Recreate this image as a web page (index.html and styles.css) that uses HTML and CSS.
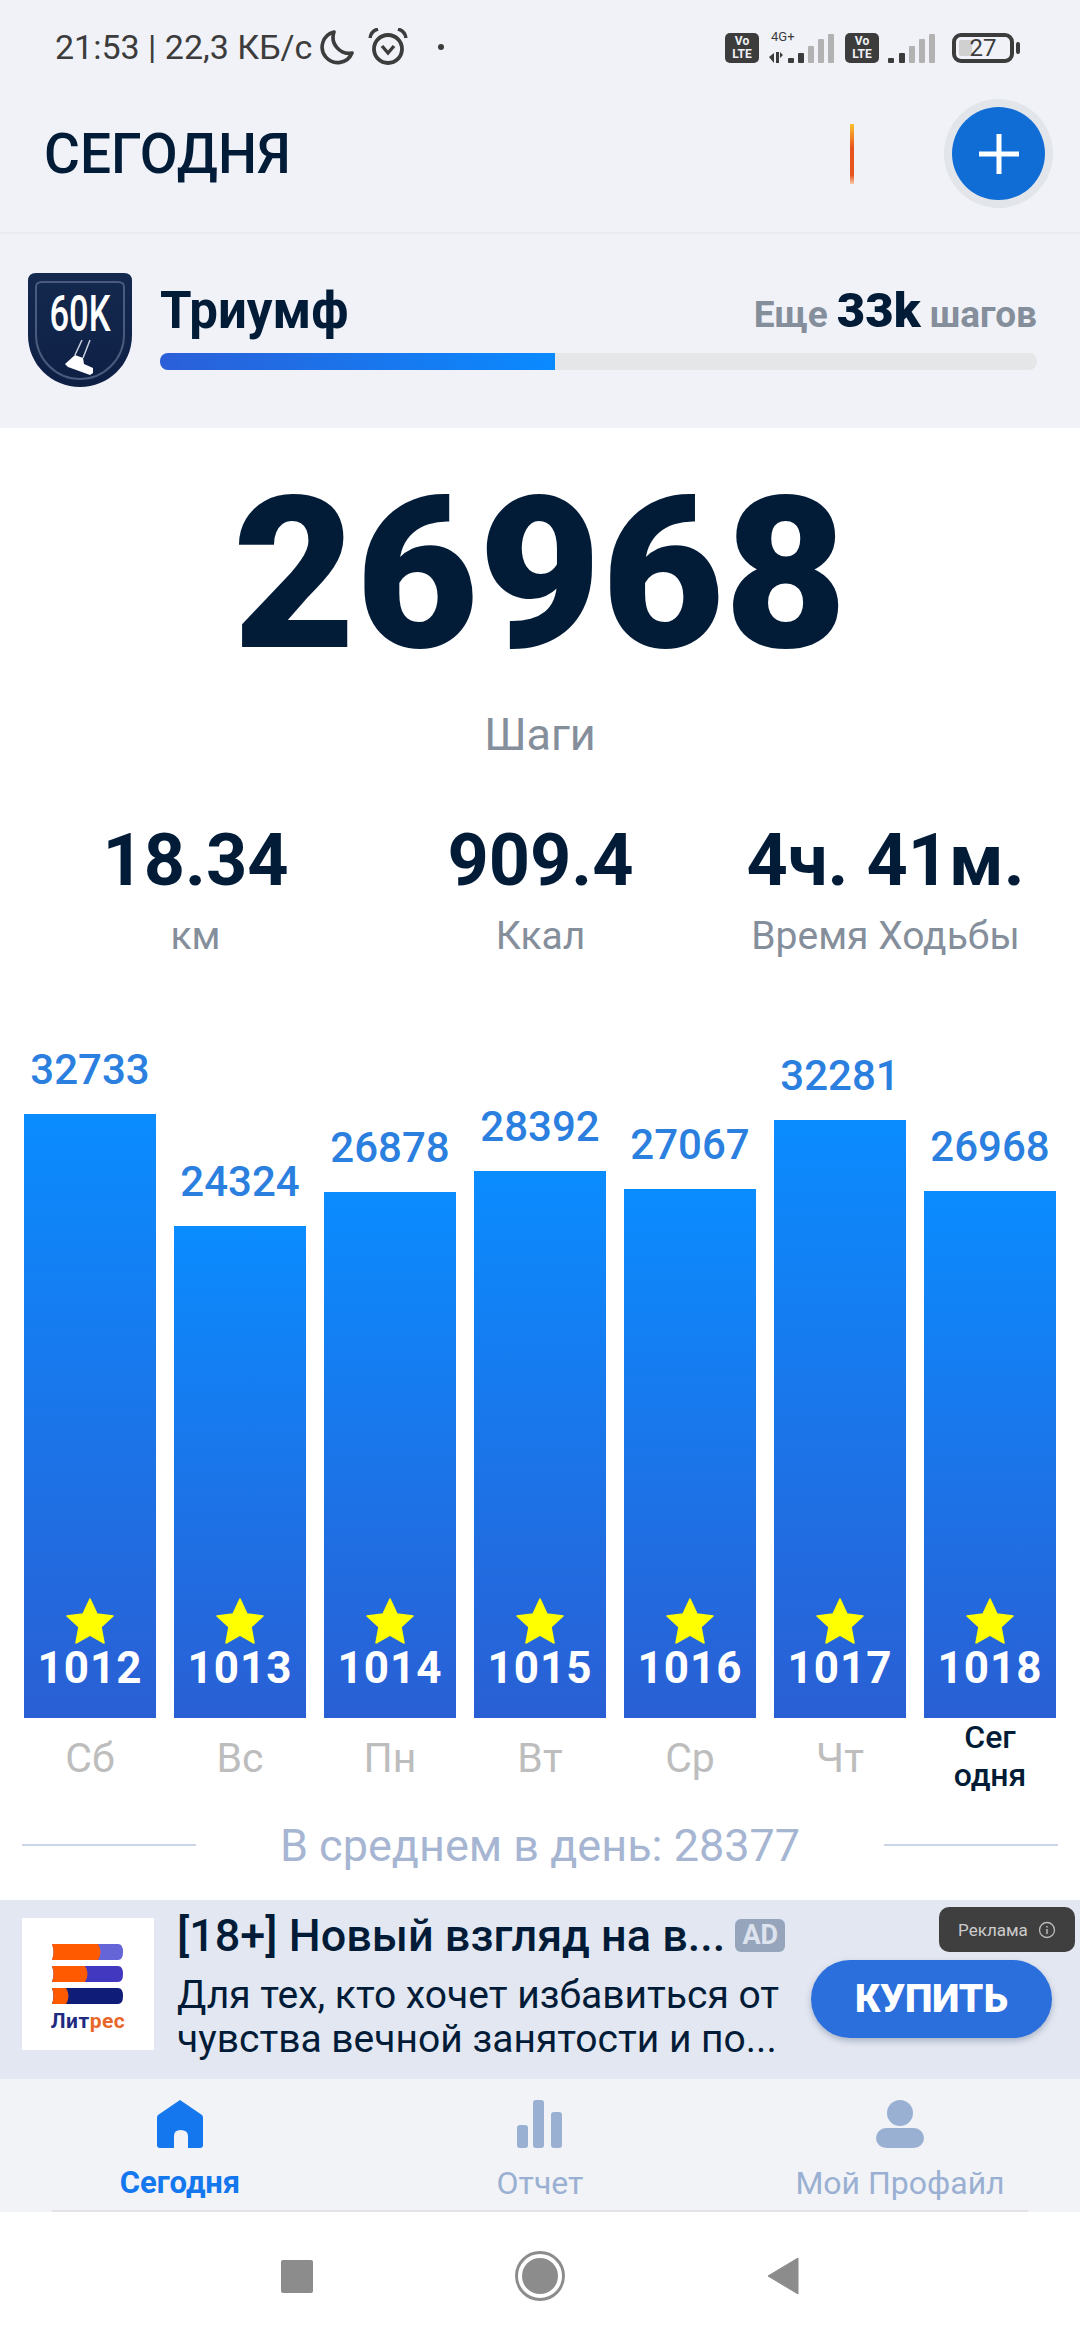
FILE: index.html
```html
<!doctype html>
<html lang="ru">
<head>
<meta charset="UTF-8">
<meta name="viewport" content="width=device-width, initial-scale=1">
<title>Шаги</title>
<link rel="stylesheet" href="styles.css">
</head>
<body>
<div class="screen">

    <div class="status">
        <span class="status-text">21:53 | 22,3 КБ/с</span>
        <svg class="ic-moon" width="36" height="36" viewBox="0 0 36 36"><path d="M15 3 A15.500 15.500 0 1 0 33 24 A16 16 0 0 1 15 3 Z" fill="none" stroke="#3c3c3c" stroke-width="3.600" stroke-linejoin="round"/></svg>
        <svg class="ic-alarm" width="40" height="37" viewBox="0 0 40 37"><circle cx="20" cy="21" r="14" fill="none" stroke="#3c3c3c" stroke-width="3.800"/><path d="M2 10 Q3 3 10 1 M38 10 Q37 3 30 1" fill="none" stroke="#3c3c3c" stroke-width="3.400"/><path d="M14 18 L20 25 L26 18" fill="none" stroke="#3c3c3c" stroke-width="3.400"/></svg>
        <span class="status-dot"></span>
        <div class="status-right">
            <div class="volte">Vo<br>LTE</div>
            <div class="sim">
                <span class="sim-type">4G+</span>
                <svg width="68" height="30" viewBox="0 0 68 30">
                    <path d="M0 24 L5 20 V30 Z M7 19 H10 V30 H7 Z M11 19 L14 22 L11 25 Z" fill="#3c3c3c"/>
                    <rect x="19" y="25" width="6" height="5" rx="1" fill="#3c3c3c"/>
                    <rect x="29" y="20" width="6" height="10" rx="1" fill="#3c3c3c"/>
                    <rect x="39" y="13" width="6" height="17" rx="1" fill="#b2b2b2"/>
                    <rect x="49" y="6" width="6" height="24" rx="1" fill="#b2b2b2"/>
                    <rect x="59" y="1" width="6" height="29" rx="1" fill="#b2b2b2"/>
                </svg>
            </div>
            <div class="volte">Vo<br>LTE</div>
            <svg class="signal2" width="50" height="30" viewBox="0 0 50 30">
                <rect x="0" y="25" width="6" height="5" rx="1" fill="#3c3c3c"/>
                <rect x="11" y="20" width="6" height="10" rx="1" fill="#3c3c3c"/>
                <rect x="21" y="13" width="6" height="17" rx="1" fill="#b2b2b2"/>
                <rect x="31" y="6" width="6" height="24" rx="1" fill="#b2b2b2"/>
                <rect x="41" y="1" width="6" height="29" rx="1" fill="#b2b2b2"/>
            </svg>
            <div class="battery">
                <span class="battery-level"></span>
                <span class="battery-num">27</span>
            </div>
            <span class="battery-nub"></span>
        </div>
    </div>

    <div class="header">
        <h1 class="page-title">СЕГОДНЯ</h1>
        <span class="flame"></span>
        <div class="add-btn">
            <svg width="40" height="40" viewBox="0 0 40 40"><path d="M20 0 V40 M0 20 H40" stroke="#fff" stroke-width="5"/></svg>
        </div>
    </div>

    <div class="goal">
        <div class="badge">
            <svg width="104" height="114" viewBox="0 0 104 114">
                <defs>
                    <linearGradient id="badgeFill" x1="0" y1="0" x2="0" y2="1">
                        <stop offset="0" stop-color="#14294f"/>
                        <stop offset="1" stop-color="#0e1f44"/>
                    </linearGradient>
                </defs>
                <path d="M8 0 H96 Q104 0 104 8 V62 C104 92 80 114 52 114 C24 114 0 92 0 62 V8 Q0 0 8 0 Z" fill="url(#badgeFill)"/>
                <path d="M14 9 H90 Q96 9 96 14 V62 C96 86 76 106 52 106 C28 106 8 86 8 62 V14 Q8 9 14 9 Z" fill="none" stroke="#4a5a7c" stroke-width="2"/>
                <path d="M54 67 L47 82 M62 67 L55 85" stroke="#c9d0de" stroke-width="1.500"/>
                <path d="M47 82 L37 91 L40 94 L62 102 L65 100 V95 L56 91 L55 85 Z" fill="#fff"/>
            </svg>
            <span class="badge-text">60K</span>
        </div>
        <div class="goal-body">
            <div class="goal-top">
                <span class="goal-name">Триумф</span>
                <span class="goal-left">Еще <b>33k</b> шагов</span>
            </div>
            <div class="progress"><div class="progress-fill" style="width: 45%"></div></div>
        </div>
    </div>

    <div class="main">
        <div class="steps">26968</div>
        <div class="steps-label">Шаги</div>

        <div class="stats">
            <div class="stat"><div class="stat-val">18.34</div><div class="stat-label">км</div></div>
            <div class="stat"><div class="stat-val">909.4</div><div class="stat-label">Ккал</div></div>
            <div class="stat"><div class="stat-val">4ч. 41м.</div><div class="stat-label">Время Ходьбы</div></div>
        </div>

        <div class="chart">
            <div class="day">
                <div class="day-val">32733</div>
                <div class="bar" style="height: 604px"><svg class="star" width="48" height="46" viewBox="0 0 48 46"><path d="M24 1 L31 16 L47 18 L35 29 L38 45 L24 37 L10 45 L13 29 L1 18 L17 16 Z" fill="#ffff00" stroke="#ffff00" stroke-width="1.500" stroke-linejoin="round"/></svg><span class="bar-num">1012</span></div>
                <div class="day-name">Сб</div>
            </div>
            <div class="day">
                <div class="day-val">24324</div>
                <div class="bar" style="height: 492px"><svg class="star" width="48" height="46" viewBox="0 0 48 46"><path d="M24 1 L31 16 L47 18 L35 29 L38 45 L24 37 L10 45 L13 29 L1 18 L17 16 Z" fill="#ffff00" stroke="#ffff00" stroke-width="1.500" stroke-linejoin="round"/></svg><span class="bar-num">1013</span></div>
                <div class="day-name">Вс</div>
            </div>
            <div class="day">
                <div class="day-val">26878</div>
                <div class="bar" style="height: 526px"><svg class="star" width="48" height="46" viewBox="0 0 48 46"><path d="M24 1 L31 16 L47 18 L35 29 L38 45 L24 37 L10 45 L13 29 L1 18 L17 16 Z" fill="#ffff00" stroke="#ffff00" stroke-width="1.500" stroke-linejoin="round"/></svg><span class="bar-num">1014</span></div>
                <div class="day-name">Пн</div>
            </div>
            <div class="day">
                <div class="day-val">28392</div>
                <div class="bar" style="height: 547px"><svg class="star" width="48" height="46" viewBox="0 0 48 46"><path d="M24 1 L31 16 L47 18 L35 29 L38 45 L24 37 L10 45 L13 29 L1 18 L17 16 Z" fill="#ffff00" stroke="#ffff00" stroke-width="1.500" stroke-linejoin="round"/></svg><span class="bar-num">1015</span></div>
                <div class="day-name">Вт</div>
            </div>
            <div class="day">
                <div class="day-val">27067</div>
                <div class="bar" style="height: 529px"><svg class="star" width="48" height="46" viewBox="0 0 48 46"><path d="M24 1 L31 16 L47 18 L35 29 L38 45 L24 37 L10 45 L13 29 L1 18 L17 16 Z" fill="#ffff00" stroke="#ffff00" stroke-width="1.500" stroke-linejoin="round"/></svg><span class="bar-num">1016</span></div>
                <div class="day-name">Ср</div>
            </div>
            <div class="day">
                <div class="day-val">32281</div>
                <div class="bar" style="height: 598px"><svg class="star" width="48" height="46" viewBox="0 0 48 46"><path d="M24 1 L31 16 L47 18 L35 29 L38 45 L24 37 L10 45 L13 29 L1 18 L17 16 Z" fill="#ffff00" stroke="#ffff00" stroke-width="1.500" stroke-linejoin="round"/></svg><span class="bar-num">1017</span></div>
                <div class="day-name">Чт</div>
            </div>
            <div class="day">
                <div class="day-val">26968</div>
                <div class="bar" style="height: 527px"><svg class="star" width="48" height="46" viewBox="0 0 48 46"><path d="M24 1 L31 16 L47 18 L35 29 L38 45 L24 37 L10 45 L13 29 L1 18 L17 16 Z" fill="#ffff00" stroke="#ffff00" stroke-width="1.500" stroke-linejoin="round"/></svg><span class="bar-num">1018</span></div>
                <div class="day-name today">Сег<br>одня</div>
            </div>
        </div>

        <div class="average">
            <span class="average-line"></span>
            <span class="average-text">В среднем в день: 28377</span>
            <span class="average-line"></span>
        </div>
    </div>

    <div class="ad">
        <div class="ad-logo">
            <svg width="72" height="60" viewBox="0 0 72 60">
                <path d="M0 0 H66 Q71 0 71 8 Q71 16 66 16 H0 Q3 8 0 0 Z" fill="#6565d8"/>
                <path d="M0 0 H46 Q51 8 46 16 H0 Q3 8 0 0 Z" fill="#ff5a00"/>
                <path d="M0 22 H66 Q71 22 71 30 Q71 38 66 38 H0 Q3 30 0 22 Z" fill="#4238c0"/>
                <path d="M0 22 H33 Q38 30 33 38 H0 Q3 30 0 22 Z" fill="#ff5a00"/>
                <path d="M0 44 H66 Q71 44 71 52 Q71 60 66 60 H0 Q3 52 0 44 Z" fill="#0f1c78"/>
                <path d="M0 44 H14 Q19 52 14 60 H0 Q3 52 0 44 Z" fill="#ff5a00"/>
            </svg>
            <div class="ad-logo-text">Лит<span>рес</span></div>
        </div>
        <div class="ad-body">
            <div class="ad-title-row">
                <span class="ad-title">[18+] Новый взгляд на в...</span>
                <span class="ad-tag">AD</span>
            </div>
            <div class="ad-desc">Для тех, кто хочет избавиться от<br>чувства вечной занятости и по...</div>
        </div>
        <div class="ad-btn">КУПИТЬ</div>
        <div class="ad-mark">
            <span>Реклама</span>
            <svg width="18" height="18" viewBox="0 0 18 18"><circle cx="9" cy="9" r="7.500" fill="none" stroke="#bbb" stroke-width="1.300"/><path d="M9 8 V13 M9 5 V6.500" stroke="#bbb" stroke-width="1.500"/></svg>
        </div>
    </div>

    <div class="tabs">
        <div class="tab active">
            <svg width="46" height="48" viewBox="0 0 46 48"><path d="M23 0 L45 15 Q46 16 46 18 V45 Q46 48 43 48 H31 V36 Q31 30 23.500 30 Q17 30 17 36 V48 H3 Q0 48 0 45 V18 Q0 16 1 15 Z" fill="#1477ee"/></svg>
            <span>Сегодня</span>
        </div>
        <div class="tab">
            <svg width="46" height="48" viewBox="0 0 46 48"><rect x="0" y="25" width="11" height="23" rx="3" fill="#9ab0d2"/><rect x="16" y="0" width="11" height="48" rx="3" fill="#9ab0d2"/><rect x="34" y="12" width="11" height="36" rx="3" fill="#9ab0d2"/></svg>
            <span>Отчет</span>
        </div>
        <div class="tab">
            <svg width="48" height="48" viewBox="0 0 48 48"><ellipse cx="24" cy="13" rx="13" ry="13" fill="#9ab0d2"/><rect x="0" y="28" width="48" height="20" rx="10" fill="#9ab0d2"/></svg>
            <span>Мой Профайл</span>
        </div>
    </div>

    <div class="nav">
        <span class="nav-square"></span>
        <svg width="50" height="50" viewBox="0 0 50 50"><circle cx="25" cy="25" r="23.500" fill="none" stroke="#8c8c8c" stroke-width="3"/><circle cx="25" cy="25" r="18" fill="#8c8c8c"/></svg>
        <svg width="32" height="38" viewBox="0 0 32 38"><path d="M31 1 V37 L1 19 Z" fill="#8c8c8c" stroke="#8c8c8c" stroke-width="1" stroke-linejoin="round"/></svg>
    </div>

</div>
</body>
</html>
```

FILE: styles.css
```css
* {
    box-sizing: border-box;
}

body {
    margin: 0;
    padding: 0;
    background: #fff;
    font-family: Roboto, "Noto Sans", sans-serif;
    color: #021c38;
}

.screen {
    width: 1080px;
    height: 2340px;
    display: flex;
    flex-direction: column;
    overflow: hidden;
}

/* status bar */
.status {
    height: 75px;
    flex: none;
    display: flex;
    align-items: center;
    padding: 18px 0 0 55px;
    background: #f0f2f7;
    color: #3c3c3c;
}

.status-text {
    font-size: 34px;
    white-space: nowrap;
}

.ic-moon {
    margin-left: 7px;
}

.ic-alarm {
    margin-left: 13px;
}

.status-dot {
    width: 6px;
    height: 6px;
    margin-left: 30px;
    border-radius: 50%;
    background: #3c3c3c;
}

.status-right {
    margin-left: auto;
    width: 355px;
    display: flex;
    align-items: flex-end;
    height: 32px;
}

.volte {
    width: 34px;
    height: 30px;
    border-radius: 5px;
    background: #3c3c3c;
    color: #f0f2f7;
    font-size: 12px;
    font-weight: 700;
    line-height: 13px;
    padding-top: 2px;
    text-align: center;
}

.sim {
    position: relative;
    margin-left: 10px;
    height: 30px;
}

.sim-type {
    position: absolute;
    left: 2px;
    top: -3px;
    font-size: 13px;
    line-height: 14px;
}

.sim + .volte {
    margin-left: 8px;
}

.signal2 {
    margin-left: 9px;
}

.battery {
    position: relative;
    width: 62px;
    height: 30px;
    margin-left: 14px;
    border: 4px solid #3c3c3c;
    border-radius: 9px;
    display: flex;
    align-items: center;
    justify-content: center;
}

.battery-level {
    position: absolute;
    left: 3px;
    top: 3px;
    bottom: 3px;
    width: 13px;
    border-radius: 2px;
    background: #d0d0d0;
}

.battery-num {
    position: relative;
    font-size: 24px;
    line-height: 22px;
}

.battery-nub {
    width: 4px;
    height: 12px;
    margin: 0 0 9px 2px;
    border-radius: 2px;
    background: #3c3c3c;
}

/* page header */
.header {
    height: 159px;
    flex: none;
    display: flex;
    align-items: center;
    padding: 0 35px 0 44px;
    background: #f0f2f7;
    border-bottom: 2px solid #e8eaee;
}

.page-title {
    margin: 0;
    font-size: 55px;
    font-weight: 500;
    flex: 1;
}

.flame {
    width: 4px;
    height: 60px;
    margin-right: 98px;
    background: linear-gradient(#fbc02d, #e8541e 40%, #e8541e 85%, #f6c9a8);
}

.add-btn {
    width: 93px;
    height: 93px;
    border-radius: 50%;
    background: #116dd6;
    box-shadow: 0 0 0 8px #e2e5ea;
    display: flex;
    align-items: center;
    justify-content: center;
}

/* achievement band */
.goal {
    height: 194px;
    flex: none;
    display: flex;
    align-items: flex-start;
    padding: 39px 43px 0 28px;
    background: #f0f2f7;
}

.badge {
    position: relative;
    width: 104px;
    height: 114px;
    flex: none;
}

.badge svg {
    display: block;
}

.badge-text {
    position: absolute;
    left: 0;
    right: 0;
    top: 12px;
    color: #fff;
    font-size: 50px;
    font-weight: 500;
    line-height: 58px;
    text-align: center;
    transform: scaleX(0.69);
}

.goal-body {
    flex: 1;
    margin-left: 28px;
}

.goal-top {
    height: 80px;
    padding-bottom: 6px;
    display: flex;
    justify-content: space-between;
    align-items: center;
}

.goal-name {
    font-size: 51px;
    font-weight: 700;
}

.goal-left {
    font-size: 37px;
    font-weight: 700;
    color: #858e9b;
}

.goal-left b {
    font-size: 49px;
    color: #021c38;
}

.progress {
    height: 17px;
    border-radius: 8px;
    background: #e4e6e8;
    overflow: hidden;
}

.progress-fill {
    height: 100%;
    background: linear-gradient(90deg, #2b5fd8, #0a8aff);
}

/* main part */
.main {
    height: 1472px;
    flex: none;
    background: #fff;
    display: flex;
    flex-direction: column;
}

.steps {
    margin-top: 42px;
    font-size: 212px;
    font-weight: 900;
    line-height: 210px;
    text-align: center;
}

.steps-label {
    margin-top: 30px;
    font-size: 45px;
    line-height: 50px;
    text-align: center;
    color: #858e9b;
}

.stats {
    margin-top: 61px;
    display: grid;
    grid-template-columns: 345px 345px 345px;
    padding-left: 23px;
}

.stat {
    text-align: center;
}

.stat-val {
    font-size: 72px;
    font-weight: 700;
    line-height: 80px;
}

.stat-label {
    margin-top: 12px;
    font-size: 39px;
    line-height: 46px;
    color: #858e9b;
}

.chart {
    margin-top: 86px;
    display: grid;
    grid-template-columns: repeat(7, 132px);
    gap: 18px;
    padding: 0 24px;
    align-items: end;
}

.day {
    display: flex;
    flex-direction: column;
    align-items: center;
}

.day-val {
    font-size: 42px;
    font-weight: 500;
    line-height: 50px;
    margin-bottom: 19px;
    color: #2b7fdf;
}

.bar {
    width: 100%;
    display: flex;
    flex-direction: column;
    justify-content: flex-end;
    align-items: center;
    padding-bottom: 32px;
    background: linear-gradient(#0a8cff, #2a5fd4);
}

.star {
    display: block;
}

.bar-num {
    margin-top: 6px;
    font-size: 44px;
    font-weight: 700;
    line-height: 36px;
    color: #fff;
    letter-spacing: 1px;
}

.day-name {
    height: 88px;
    padding-top: 16px;
    font-size: 41px;
    line-height: 48px;
    color: #bdbdbd;
}

.day-name.today {
    padding-top: 0;
    font-size: 32px;
    font-weight: 500;
    line-height: 38px;
    text-align: center;
    color: #021c38;
}

.average {
    margin-top: 9px;
    display: flex;
    align-items: center;
    justify-content: space-between;
    padding: 0 22px;
    height: 60px;
}

.average-line {
    width: 174px;
    height: 2px;
    background: #ccd5e6;
}

.average-text {
    font-size: 45px;
    color: #a6b5d2;
}

/* ad */
.ad {
    position: relative;
    height: 179px;
    flex: none;
    display: flex;
    padding: 18px 28px 0 22px;
    background: #e3e7f1;
}

.ad-logo {
    width: 132px;
    height: 132px;
    flex: none;
    background: #fff;
    display: flex;
    flex-direction: column;
    align-items: center;
    padding-top: 26px;
}

.ad-logo-text {
    margin-top: 6px;
    font-size: 21px;
    line-height: 22px;
    font-weight: 700;
    letter-spacing: 0.5px;
    color: #1f2a80;
}

.ad-logo-text span {
    color: #e8662a;
}

.ad-body {
    margin-left: 23px;
    width: 620px;
}

.ad-title-row {
    display: flex;
    align-items: center;
    height: 34px;
}

.ad-title {
    font-size: 45px;
    font-weight: 500;
    white-space: nowrap;
}

.ad-tag {
    margin-left: 10px;
    width: 50px;
    height: 33px;
    border-radius: 6px;
    background: #96a5bb;
    color: #dde3ee;
    font-size: 27px;
    font-weight: 700;
    line-height: 33px;
    text-align: center;
}

.ad-desc {
    margin-top: 21px;
    font-size: 39px;
    line-height: 44px;
    white-space: nowrap;
}

.ad-btn {
    position: absolute;
    left: 811px;
    top: 60px;
    width: 241px;
    height: 78px;
    border-radius: 39px;
    background: #2a6fdc;
    box-shadow: 0 3px 6px rgba(60, 80, 120, 0.35);
    color: #fff;
    font-size: 39px;
    font-weight: 900;
    line-height: 78px;
    text-align: center;
}

.ad-mark {
    position: absolute;
    left: 939px;
    top: 7px;
    width: 136px;
    height: 45px;
    border-radius: 10px;
    background: #3f3f3f;
    color: #ccc;
    font-size: 17px;
    display: flex;
    align-items: center;
    justify-content: center;
    gap: 10px;
}

/* bottom tabs */
.tabs {
    height: 133px;
    flex: none;
    display: grid;
    grid-template-columns: 360px 360px 360px;
    padding-top: 21px;
    background: #f1f3f7;
    position: relative;
}

.tabs::after {
    content: "";
    position: absolute;
    left: 52px;
    right: 52px;
    bottom: 0;
    height: 2px;
    background: #e4e4e4;
}

.tab {
    display: flex;
    flex-direction: column;
    align-items: center;
    color: #9ab0d2;
    font-size: 32px;
}

.tab span {
    margin-top: 17px;
    line-height: 36px;
}

.tab.active {
    color: #1477ee;
    font-weight: 700;
    font-size: 31px;
}

/* system nav */
.nav {
    flex: 1;
    display: flex;
    justify-content: center;
    align-items: center;
    gap: 202px;
    background: #fff;
}

.nav-square {
    width: 32px;
    height: 33px;
    border-radius: 2px;
    background: #8c8c8c;
}
```
